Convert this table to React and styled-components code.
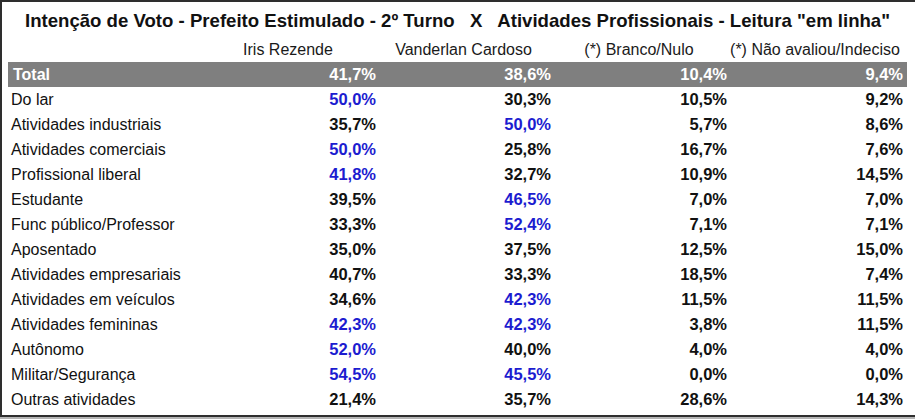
import styled, { createGlobalStyle } from "styled-components";

const GlobalStyle = createGlobalStyle`
  html, body {
    margin: 0;
    padding: 0;
    background: #b4b4b4;
  }
  body {
    font-family: "Liberation Sans", Arial, sans-serif;
  }
`;

const Frame = styled.div`
  width: 907px;
  height: 413px;
  background: #fff;
  border-top: 2px solid #2e2e2e;
  border-left: 2px solid #2e2e2e;
  border-bottom: 2px solid #2e2e2e;
  padding-left: 6px;
`;

const Title = styled.div`
  width: 899px;
  height: 35px;
  padding-top: 3px;
  box-sizing: border-box;
  display: flex;
  align-items: center;
  justify-content: center;
  font-weight: bold;
  font-size: 18.6px;
  color: #111;
  white-space: pre;
`;

const Row = styled.div`
  width: 899px;
  height: 25px;
  display: grid;
  grid-template-columns: 192px 176px 175px 176px 176px 4px;
  align-items: center;
  font-size: 16px;
  background: ${(p) => (p.$total ? "#7f7f7f" : "transparent")};
  color: ${(p) => (p.$total ? "#fff" : "#111")};
`;

const Label = styled.div`
  padding-left: ${(p) => (p.$total ? "5px" : "3px")};
  font-weight: ${(p) => (p.$total ? "bold" : "normal")};
  white-space: nowrap;
`;

const Head = styled.div`
  text-align: center;
  white-space: nowrap;
  color: #1a1a1a;
  padding-top: 1px;
`;

const Value = styled.div`
  text-align: right;
  font-weight: bold;
  font-size: 16.5px;
  color: ${(p) => (p.$hi ? "#1c1cd0" : "inherit")};
`;

const headers = ["Iris Rezende", "Vanderlan Cardoso", "(*) Branco/Nulo", "(*) Não avaliou/Indeciso"];

const rows = [
  ["Do lar", ["50,0%", "30,3%", "10,5%", "9,2%"], [0]],
  ["Atividades industriais", ["35,7%", "50,0%", "5,7%", "8,6%"], [1]],
  ["Atividades comerciais", ["50,0%", "25,8%", "16,7%", "7,6%"], [0]],
  ["Profissional liberal", ["41,8%", "32,7%", "10,9%", "14,5%"], [0]],
  ["Estudante", ["39,5%", "46,5%", "7,0%", "7,0%"], [1]],
  ["Func público/Professor", ["33,3%", "52,4%", "7,1%", "7,1%"], [1]],
  ["Aposentado", ["35,0%", "37,5%", "12,5%", "15,0%"], []],
  ["Atividades empresariais", ["40,7%", "33,3%", "18,5%", "7,4%"], []],
  ["Atividades em veículos", ["34,6%", "42,3%", "11,5%", "11,5%"], [1]],
  ["Atividades femininas", ["42,3%", "42,3%", "3,8%", "11,5%"], [0, 1]],
  ["Autônomo", ["52,0%", "40,0%", "4,0%", "4,0%"], [0]],
  ["Militar/Segurança", ["54,5%", "45,5%", "0,0%", "0,0%"], [0, 1]],
  ["Outras atividades", ["21,4%", "35,7%", "28,6%", "14,3%"], []],
];

export default function App() {
  return (
    <>
      <GlobalStyle />
      <Frame>
        <Title>{'Intenção de Voto - Prefeito Estimulado - 2º Turno   X   Atividades Profissionais - Leitura "em linha"'}</Title>
        <Row>
          <div />
          {headers.map((h) => (
            <Head key={h}>{h}</Head>
          ))}
        </Row>
        <Row $total>
          <Label $total>Total</Label>
          {["41,7%", "38,6%", "10,4%", "9,4%"].map((v, i) => (
            <Value key={i}>{v}</Value>
          ))}
        </Row>
        {rows.map(([label, vals, hi]) => (
          <Row key={label}>
            <Label>{label}</Label>
            {vals.map((v, i) => (
              <Value key={i} $hi={hi.includes(i)}>
                {v}
              </Value>
            ))}
          </Row>
        ))}
      </Frame>
    </>
  );
}
